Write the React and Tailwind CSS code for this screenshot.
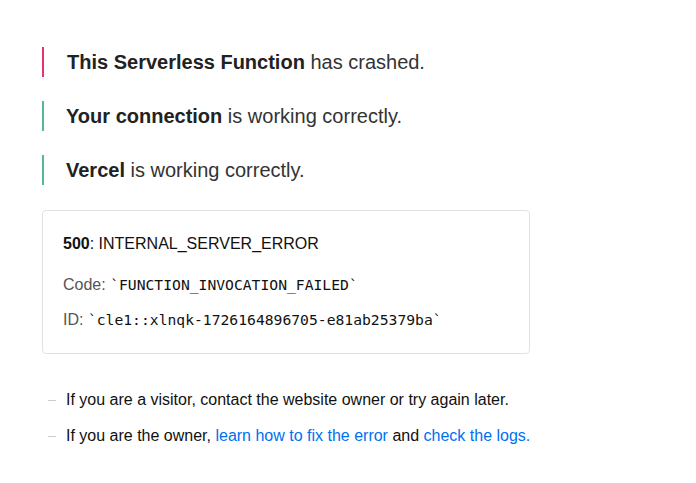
export default function App() {
  const sans = { fontFamily: '"Liberation Sans", Arial, sans-serif' };
  const mono = { fontFamily: '"DejaVu Sans Mono", monospace' };
  return (
    <div className="min-h-[483px] w-[696px] bg-white pt-[47px] pl-[42px]" style={sans}>
      <div className="flex flex-col gap-[24px]">
        <p className="border-l-2 border-[#e8336d] pl-[23px] pt-px text-[20px] leading-[29px] text-[#333]">
          <strong className="font-bold text-[#222]">This Serverless Function</strong> has crashed.
        </p>
        <p className="border-l-2 border-[#55b795] pl-[22px] pt-px text-[20px] leading-[29px] text-[#333]">
          <strong className="font-bold text-[#222]">Your connection</strong> is working correctly.
        </p>
        <p className="border-l-2 border-[#55b795] pl-[22px] pt-px text-[20px] leading-[29px] text-[#333]">
          <strong className="font-bold text-[#222]">Vercel</strong> is working correctly.
        </p>
      </div>
      <div className="mt-[25px] flex h-[144px] w-[488px] flex-col rounded-[4px] border border-[#e2e2e2] px-[20px] pt-[21px]">
        <p className="text-[16px] leading-[24px] text-[#111]">
          <strong className="font-bold">500</strong>: INTERNAL_SERVER_ERROR
        </p>
        <p className="mt-[17px] text-[16px] leading-[24px] text-[#555]">
          Code: <code className="text-[14.7px] text-[#111]" style={mono}>`FUNCTION_INVOCATION_FAILED`</code>
        </p>
        <p className="mt-[11px] text-[16px] leading-[24px] text-[#555]">
          ID: <code className="text-[14.7px] text-[#111]" style={mono}>`cle1::xlnqk-1726164896705-e81ab25379ba`</code>
        </p>
      </div>
      <ul className="mt-[34px] flex flex-col gap-[12px]">
        <li className="flex items-center text-[16px] leading-[24px] text-[#111]">
          <span className="ml-[6px] mr-[10px] h-px w-[8px] bg-[#ccc]" />
          If you are a visitor, contact the website owner or try again later.
        </li>
        <li className="flex items-center text-[16px] leading-[24px] text-[#111]">
          <span className="ml-[6px] mr-[10px] h-px w-[8px] bg-[#ccc]" />
          <span>
            If you are the owner, <a className="text-[#0070f3]" href="#">learn how to fix the error</a> and <a className="text-[#0070f3]" href="#">check the logs.</a>
          </span>
        </li>
      </ul>
    </div>
  );
}
